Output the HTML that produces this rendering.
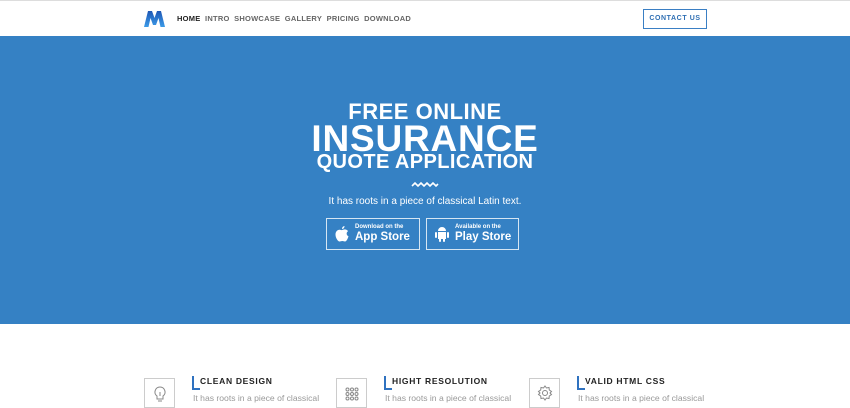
<!DOCTYPE html>
<html><head><meta charset="utf-8">
<style>
*{margin:0;padding:0;box-sizing:border-box}
body{width:850px;height:405px;overflow:hidden;background:#fff;font-family:"Liberation Sans",sans-serif;position:relative}
.nav{position:absolute;top:0;left:0;width:850px;height:36px;border-top:1px solid #ddd;background:#fff}
.logo{position:absolute;left:144px;top:10px}
.menu{position:absolute;left:177px;top:13px;font-size:7.5px;font-weight:bold;letter-spacing:.25px;color:#666;white-space:nowrap}
.menu span{margin-right:4.5px}
.menu span.a{color:#222}
.contact{position:absolute;left:643px;top:8px;width:64px;height:20px;border:1px solid #3a7fc4;color:#2f6fb3;font-size:7px;font-weight:bold;letter-spacing:.6px;text-align:center;line-height:18px}
.hero{position:absolute;top:36px;left:0;width:850px;height:288px;background:#3581c4}
.t{position:absolute;left:0;width:850px;text-align:center;color:#fff;font-weight:bold;white-space:nowrap}
.btn{position:absolute;top:218px;height:32px;border:1px solid rgba(255,255,255,.8);color:#fff}
.btn .s{position:absolute;left:28px;top:5px;font-size:6px;font-weight:bold}
.btn .b{position:absolute;left:28px;top:12px;font-size:11.5px;font-weight:bold}
.ib{position:absolute;top:378px;width:31px;height:30px;border:1px solid #ccc}
.fh{position:absolute;top:376px;font-size:8.5px;font-weight:bold;letter-spacing:.7px;color:#222;padding-left:6px;border-left:2px solid #2f72c0;height:14px;line-height:10px}
.fh:after{content:"";position:absolute;left:-2px;bottom:0;width:8px;height:2px;background:#2f72c0}
.ft{position:absolute;top:393px;font-size:8.6px;color:#999;white-space:nowrap}
</style></head><body>
<div class="nav">
<svg class="logo" width="21" height="16" viewBox="0 0 21 16"><defs><linearGradient id="g" x1="0" y1="0" x2="0" y2="1"><stop offset="0" stop-color="#1e57b5"/><stop offset="1" stop-color="#3c9be8"/></linearGradient></defs><path d="M0 16 L4 0 H8 L10.5 7 L13 0 H17 L21 16 H16.5 L14.5 7 L12 14 H9 L6.5 7 L4.5 16Z" fill="url(#g)"/></svg>
<div class="menu"><span class="a">HOME</span><span>INTRO</span><span>SHOWCASE</span><span>GALLERY</span><span>PRICING</span><span>DOWNLOAD</span></div>
<div class="contact">CONTACT US</div>
</div>
<div class="hero"></div>
<div class="t" style="top:99px;font-size:22px;letter-spacing:.5px">FREE ONLINE</div>
<div class="t" style="top:118px;font-size:37px;letter-spacing:.8px">INSURANCE</div>
<div class="t" style="top:151px;font-size:20px;letter-spacing:.4px">QUOTE APPLICATION</div>
<svg style="position:absolute;left:411px;top:181px" width="28" height="7" viewBox="0 0 28 7"><path d="M1 5 L4 2 L7 5 L10 2 L13 5 L16 2 L19 5 L22 2 L25 5 L27 3" stroke="#fff" stroke-width="1.6" fill="none"/></svg>
<div class="t" style="top:196px;font-size:10px;font-weight:normal">It has roots in a piece of classical Latin text.</div>
<div class="btn" style="left:326px;width:94px">
<svg style="position:absolute;left:8px;top:7px" width="14" height="16" viewBox="0 0 14 16"><path d="M9.5 0 C9.6 1.5 8.5 3 7 3 C6.9 1.6 8 .2 9.5 0Z M7 4 C8 4 9 3.3 10 3.4 C11.5 3.5 12.5 4.3 13 5.2 C11 6.3 11.3 9.4 13.5 10.2 C13 12 11.5 15.5 10 15.5 C9 15.5 8.5 15 7.3 15 C6 15 5.5 15.6 4.5 15.5 C3 15.4 0.5 12 0.5 8.6 C0.5 5.6 2.5 3.8 4.3 3.8 C5.5 3.8 6.2 4.4 7 4Z" fill="#fff"/></svg>
<div class="s">Download on the</div><div class="b">App Store</div></div>
<div class="btn" style="left:426px;width:93px">
<svg style="position:absolute;left:8px;top:6px" width="14" height="18" viewBox="0 0 14 18"><path d="M3 6 A4 4 0 0 1 11 6Z M3 7 H11 V14 H3Z" fill="#fff"/><rect x="0" y="7" width="2" height="6" rx="1" fill="#fff"/><rect x="12" y="7" width="2" height="6" rx="1" fill="#fff"/><rect x="4" y="13" width="2" height="4" rx="1" fill="#fff"/><rect x="8" y="13" width="2" height="4" rx="1" fill="#fff"/></svg>
<div class="s">Available on the</div><div class="b">Play Store</div></div>

<div class="ib" style="left:144px"><svg style="position:absolute;left:9px;top:7px" width="12" height="18" viewBox="0 0 12 18"><path d="M6 1 A5 5 0 0 0 3 10 V13 H9 V10 A5 5 0 0 0 6 1Z M4 15 H8 M6 10 V6" stroke="#888" fill="none"/></svg></div>
<div class="fh" style="left:192px">CLEAN DESIGN</div>
<div class="ft" style="left:193px">It has roots in a piece of classical</div>
<div class="ib" style="left:336px"><svg style="position:absolute;left:8px;top:8px" width="14" height="14" viewBox="0 0 14 14" fill="none" stroke="#888"><circle cx="2.5" cy="2.5" r="1.5"/><circle cx="7" cy="2.5" r="1.5"/><circle cx="11.5" cy="2.5" r="1.5"/><circle cx="2.5" cy="7" r="1.5"/><circle cx="7" cy="7" r="1.5"/><circle cx="11.5" cy="7" r="1.5"/><circle cx="2.5" cy="11.5" r="1.5"/><circle cx="7" cy="11.5" r="1.5"/><circle cx="11.5" cy="11.5" r="1.5"/></svg></div>
<div class="fh" style="left:384px">HIGHT RESOLUTION</div>
<div class="ft" style="left:385px">It has roots in a piece of classical</div>
<div class="ib" style="left:529px"><svg style="position:absolute;left:7px;top:6px" width="16" height="16" viewBox="0 0 16 16" fill="none" stroke="#888"><path d="M8 1 L9.5 3 L12 2.5 L12.3 5 L14.5 6.5 L13 8 L14.5 9.5 L12.3 11 L12 13.5 L9.5 13 L8 15 L6.5 13 L4 13.5 L3.7 11 L1.5 9.5 L3 8 L1.5 6.5 L3.7 5 L4 2.5 L6.5 3Z"/><circle cx="8" cy="8" r="2.5"/></svg></div>
<div class="fh" style="left:577px">VALID HTML CSS</div>
<div class="ft" style="left:578px">It has roots in a piece of classical</div>
</body></html>
